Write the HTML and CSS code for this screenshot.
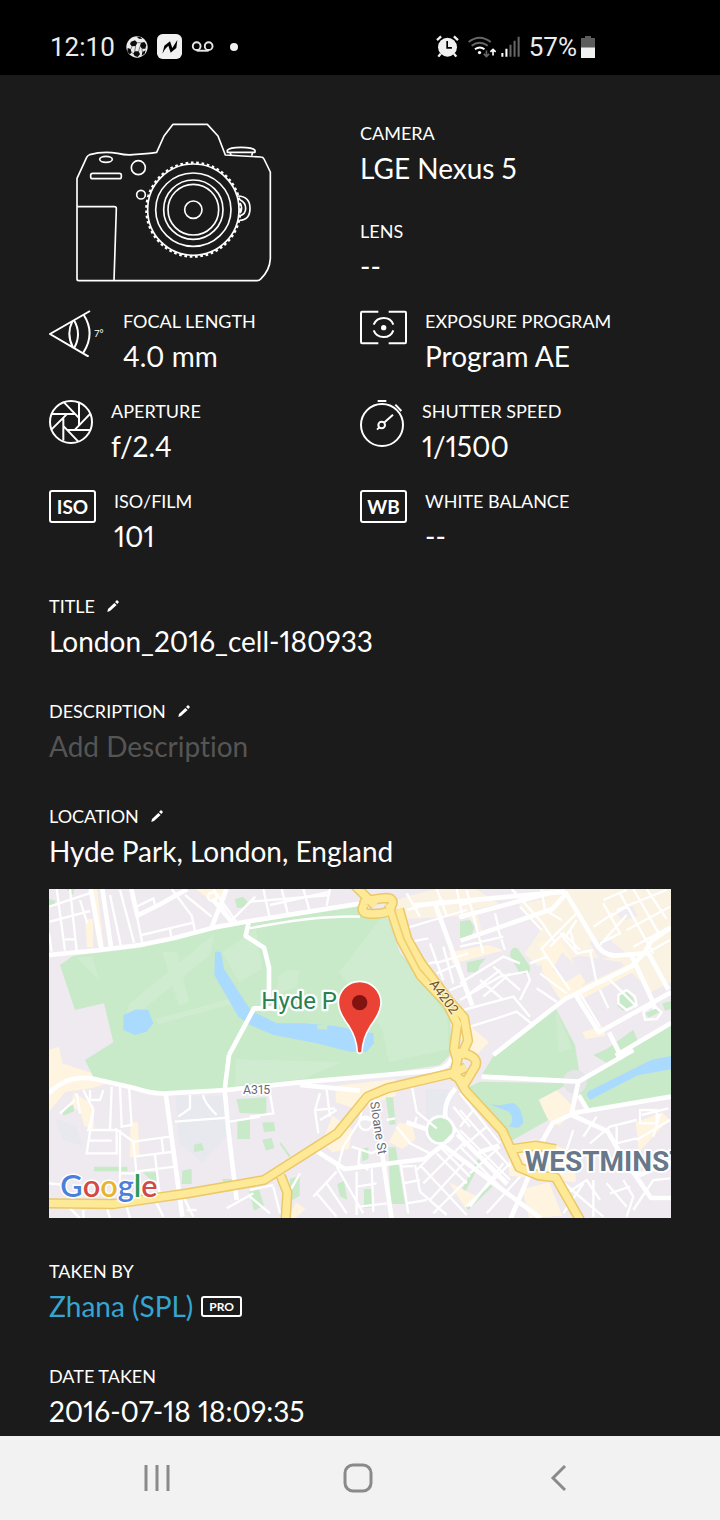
FILE: index.html
```html
<!DOCTYPE html>
<html lang="en">
<head>
<meta charset="utf-8">
<meta name="viewport" content="width=device-width, initial-scale=1">
<title>Photo info</title>
<link rel="stylesheet" href="styles.css">
</head>
<body>
<header class="status">
  <div class="status-group status-left">
    <span>12:10</span>
    <svg class="ball" viewBox="378 107 66 66" width="22" height="22" aria-hidden="true"><circle cx="411" cy="140" r="32" fill="#ececec"/><g fill="#0c0c0c"><path d="M393 124l12-4 7 7-5 10-12 1-5-7zM423 127l10-2 6 9-3 11-10 0-6-8zM383 143l9 3 3 11-6 5-7-8zM404 153l12 0 4 9-7 8-9-3-4-7zM427 155l10-5-3 10-9 6zM410 109l11 1 6 6-10-1z"/></g><g stroke="#444" stroke-width="2"><path d="M407 137l-3 16M420 138l-4 15M412 127l10 0M393 146l3-8M426 145l1 10M395 157l7 3"/></g></svg>
    <svg viewBox="468 102 75 75" width="25" height="25" aria-hidden="true"><rect x="468" y="102" width="75" height="75" rx="17" fill="#f1f1f1"/><path d="M484 161l6-24 17-13 7 20 8-13 7-11-3 24-17 14-7-21-10 11z" fill="#000"/></svg>
    <svg class="voicemail" viewBox="568 120 68 34" width="23" height="11" aria-hidden="true"><g fill="none" stroke="#e6e6e6" stroke-width="6"><circle cx="584" cy="136" r="12"/><circle cx="621" cy="136" r="12"/><path d="M584 150h37"/></g></svg>
    <span class="dot"></span>
  </div>
  <div class="status-group status-right">
    <svg viewBox="229 106 68 68" width="23" height="23" aria-hidden="true"><circle cx="263" cy="142" r="28" fill="#f1f1f1"/><g fill="none" stroke="#f1f1f1" stroke-width="7"><path d="M232 121l12-11M282 110l12 11M243 161l-7 9M282 161l7 9"/><path d="M262 124v20h14" stroke="#000" stroke-width="5"/></g></svg>
    <svg class="wifi" viewBox="321 106 85 66" width="28" height="22" aria-hidden="true"><g fill="none" stroke-width="6"><path d="M323 124q33-26 67 0M332 135q24-18 49 0" stroke="#666"/><path d="M342 146q15-11 29 0" stroke="#fff"/><path d="M377 150v16M369 160l8 8 8-8" stroke="#666" stroke-width="5"/><path d="M397 165v-16M389 154l8-8 8 8" stroke="#fff" stroke-width="5"/></g><circle cx="356" cy="156" r="5" fill="#fff"/></svg>
    <svg class="signal" viewBox="422 110 56 62" width="19" height="21" aria-hidden="true"><path d="M423 160h6v11h-6zM435 148h6v23h-6z" fill="#fff"/><path d="M447 136h6v35h-6zM459 124h6v47h-6zM471 112h6v59h-6z" fill="#666"/></svg>
    <span>57%</span>
    <svg viewBox="663 106 42 66" width="14" height="22" aria-hidden="true"><path d="M663 112h12v-6h18v6h12v28h-42z" fill="#5c5c5c"/><path d="M663 140h42v32h-42z" fill="#f1f1f1"/></svg>
  </div>
</header>

<main class="info">
  <section class="gear">
    <svg class="camera" viewBox="48 40 588 480" width="196" height="160" role="img" aria-label="Camera">
      <g fill="none" stroke="#fff" stroke-width="5" stroke-linejoin="round">
        <path d="M56 513q-5 0-5-5V206L80 143q3-6 9-8 40-11 84-4 25 6 45 4 45-3 72-7L312 79l27-35h103l32 35 22 57 107 6q6 0 9 6l19 39v260q-2 35-28 60-5 6-12 6z"/>
        <path d="M51 291h112q6 0 6 6l-7 216"/>
        <ellipse cx="138" cy="149" rx="19" ry="9"/><rect x="92" y="191" width="92" height="16" rx="6"/>
        <circle cx="235" cy="174" r="21"/><circle cx="243" cy="255" r="13"/>
        <circle cx="400" cy="300" r="137"/><circle cx="400" cy="300" r="141" stroke-width="7" stroke-dasharray="8 8"/>
        <ellipse cx="400" cy="300" rx="113" ry="110"/><circle cx="400" cy="300" r="89"/><circle cx="400" cy="300" r="76"/><circle cx="400" cy="300" r="26"/>
        <path d="M533 259q37 1 37 37t-32 36M540 270q17 8 17 26t-18 23M540 281q10 15 0 30"/>
        <path d="M502 128v-6q6-9 41-9t42 9v6zM510 128l3 8M578 128l-3 10"/>
      </g>
    </svg>
    <dl class="gear-list">
      <div><dt class="label">CAMERA</dt><dd class="value">LGE Nexus 5</dd></div>
      <div><dt class="label">LENS</dt><dd class="value">--</dd></div>
    </dl>
  </section>

  <dl class="specs">
    <div class="spec">
      <svg class="icon" viewBox="57 44 168 141" width="56" height="47" aria-hidden="true"><g fill="none" stroke="#fff" stroke-width="6"><path d="M180 47L60 116l116 68M161 58q36 56-1 114M127 78q-19 38 2 79M132 75q24 41 0 84"/></g><text x="193" y="125" font-family="Lato, sans-serif" font-size="29" fill="#fff">7°</text></svg>
      <div><dt class="label">FOCAL LENGTH</dt><dd class="value">4.0 mm</dd></div>
    </div>
    <div class="spec">
      <svg class="icon" viewBox="45 45 141 105" width="47" height="35" aria-hidden="true"><g fill="none" stroke="#fff" stroke-width="6"><path d="M100 50H51q-3 0-3 4v87q0 4 3 4h49M131 50h49q3 0 3 4v87q0 4-3 4h-49M86 89q8-20 30-20t29 20M86 106q8 20 30 20t29-20"/></g><circle cx="116" cy="98" r="8" fill="#fff"/></svg>
      <div><dt class="label">EXPOSURE PROGRAM</dt><dd class="value">Program AE</dd></div>
    </div>
    <div class="spec">
      <svg class="icon" viewBox="57 315 132 132" width="44" height="44" aria-hidden="true"><g fill="none" stroke="#fff" stroke-width="6"><circle cx="123" cy="381" r="63"/><path d="M102 322l46 48M147 323v69M181 356l-46 48M180 405h-70M145 440l-46-48M100 437v-69M64 404l46-46M65 357h70"/></g></svg>
      <div><dt class="label">APERTURE</dt><dd class="value">f/2.4</dd></div>
    </div>
    <div class="spec">
      <svg class="icon" viewBox="45 315 132 141" width="44" height="47" aria-hidden="true"><g fill="none" stroke="#fff" stroke-width="6"><circle cx="111" cy="390" r="63"/><path d="M98 318h26M151 329l18 19"/><circle cx="110" cy="390" r="10"/><path d="M117 383l27-24M103 397l-7 7"/></g></svg>
      <div><dt class="label">SHUTTER SPEED</dt><dd class="value">1/1500</dd></div>
    </div>
    <div class="spec">
      <span class="icon tag" aria-hidden="true">ISO</span>
      <div><dt class="label">ISO/FILM</dt><dd class="value">101</dd></div>
    </div>
    <div class="spec">
      <span class="icon tag" aria-hidden="true">WB</span>
      <div><dt class="label">WHITE BALANCE</dt><dd class="value">--</dd></div>
    </div>
  </dl>

  <section class="field">
    <h2 class="label">TITLE <button class="edit" type="button" aria-label="Edit title"><svg viewBox="230 28 36 36" width="12" height="12"><path d="M231 64l2-9 19-18 7 6-20 18zM254 34l6-6 6 6-5 6z" fill="#fff"/></svg></button></h2>
    <p class="value">London_2016_cell-180933</p>
  </section>
  <section class="field">
    <h2 class="label">DESCRIPTION <button class="edit" type="button" aria-label="Edit description"><svg viewBox="230 28 36 36" width="12" height="12"><path d="M231 64l2-9 19-18 7 6-20 18zM254 34l6-6 6 6-5 6z" fill="#fff"/></svg></button></h2>
    <p class="value empty">Add Description</p>
  </section>
  <section class="field">
    <h2 class="label">LOCATION <button class="edit" type="button" aria-label="Edit location"><svg viewBox="230 28 36 36" width="12" height="12"><path d="M231 64l2-9 19-18 7 6-20 18zM254 34l6-6 6 6-5 6z" fill="#fff"/></svg></button></h2>
    <p class="value">Hyde Park, London, England</p>
    <svg class="map" viewBox="0 0 1866 987" role="img" aria-label="Map of Hyde Park, London">
      <rect width="1866" height="987" fill="#eeeaef"/>
      <!-- commercial blocks -->
      <g fill="#fef4df">
        <path d="M108 90h24v85h-18zM122 0h22l20 170h-18zM440 0h90v30l-40 10zM0 483l30-10 10 50 90 30 60 25-60 20-80 10-50 60z"/>
        <path d="M75 610l60 40v70l-30-10-10-40-30-20zM245 700h22l5 105h-30z"/>
        <path d="M1020 40l60-20 80-20h120l80 50 100-50h406v280l-60 30-90-90-120-20-130 30-90-80-80-20-40-50-180 10-110 60-60 10z" opacity=".75"/>
        <path d="M1200 190l160-30v25l-150 40zM1470 160l60-10 80 130-70 60-60-90zM1250 400l70 60-40 40-70-80zM1580 300l170-80 10 25-170 90zM1600 430l60-20 10 30-60 10z"/>
        <path d="M860 590l180-20v50l-120 40-60-20zM850 680l60 40-10 60-50 10-30-30zM1020 760l30-60 40 10 10 40-40 30zM1470 620l50-20 60 60-50 50-40-20zM1380 770l80-20 120 40v90l-200-20zM1420 900l80-20 40 100-100 7zM740 940l30 20-30 27h-20zM1200 880l80 40-30 40z"/>
        <path d="M1760 700l80-30 20 20-90 100z"/>
      </g>
      <g fill="#efebf0"><path d="M1280 60l120-25 80 80-60 90-110-40zM1540 190l60 60-50 30-40-40zM1620 160l30 50 90-10-60-50zM1380 0h90l20 30-90 15zM1700 70l50-20 15 30-45 15z"/></g>
      <path d="M1130 600h70v160h-70zM380 620h150l20 100-90 100-70-60zM20 690l60 20 20 60-60-20z" fill="#e3e8ef" opacity=".6"/>
      <!-- parks -->
      <g fill="#c8eac9">
        <path d="M73 200L273 176 493 118 633 98 933 48l5 33 80 7 35 105 80 90 70 100 5 110-35 35-200 30-220 20-220 25-180 10h-70l-100-35-50-15-25-50 85-53-28-117-87 20-45-135z"/>
        <path d="M1298 558l40-65 180-140 60 115 15 95-55 5zM1253 598l40-20 270 5-95 50 30 60-115 65zM1593 585l110-87 163-90v215l-253 45-20-55zM1633 498l40-18 80-58 15 38-60 40-30 25z"/>
        <path d="M1233 97l30-4 13 22-10 30-33 2zM1385 185q10-15 22-5l35 50q5 25-15 25t-22-15l-22-40zM1253 220l58-12-18 20-8 22h-30zM1706 315l30-10 25 38-38 22-18-15zM1790 373l35-17 12 10-38 20zM1840 343l26-7v24l-18 5zM557 30l25-7 14 15-8 18h-24zM52 0h24l-4 18zM0 30l20 5-5 18H0z"/>
        <circle cx="1174" cy="723" r="36"/>
        <path d="M1010 625h22l8 80-18 3zM1018 775h22l28 170h-43zM562 630l90-5v50l-80-3zM565 690h38v60h-38zM640 700h35l4 26-34 4zM640 752l28-5 8 30-25 8zM938 780l20-5v35l-18 7zM945 900h25v55l-25 2zM865 885l20-10 10 57-22-10zM722 870l30-10v60l-25 15zM40 660l33-13 2 20-32 13zM435 767l23-5 8 22-30 5zM135 833h100v14H135zM282 850h42v25l-20-3zM400 845l28-5v45h-30zM520 870h35v20h-30zM695 760l30 40-5 5-28-40zM1240 900l50-95 10 5-50 95zM1250 955l75-70 5 8-72 70zM600 905l30-5 15 50-30 15z"/>
      </g>
      <g fill="#d1ecd2" opacity=".75"><path d="M240 345l255-210-10 60-170 140-90 70zM385 190l35 150-30 10-50-160zM870 250l140-180 45 130 140 180 5 100-180 40-20-100zM690 260l30-20 30 5-5 50-65 20zM520 190l100-70 20 120-70 40zM560 510l320 10-120 50-200 20zM320 390l220-60 10 15-220 60zM80 205l50-3 20 70zM1520 360l50 120-40 10z"/></g>
      <circle cx="1578" cy="578" r="36" fill="#e5e4e6"/>
      <g fill="#aadafe">
        <path d="M223 378l40-17 35 2 15 40-20 25-35 10-35-15zM498 188h18l9 52 58 90 28 42h10l62 31h80l90 7 120 23 2 30-22 25h-50l-100-25-130-25-70-30-35-25-72-125z"/>
        <path d="M1616 608l190-95 60-12v40l-100 18-142 73-10-12zM1323 646l28 3 40-7q28 10 32 60l-15 15-28-4q22-28-5-47-28-8-52-20z"/>
      </g>
      <path d="M805 408h30v13h-30z" fill="#c8eac9"/>
      <!-- lanes -->
      <g fill="none" stroke="#fff" stroke-width="7">
        <g transform="translate(-27 -27)"><path d="M50 27l25 185M90 27l20 185M28 80l120-40M30 125l120-32M75 178h35M120 60l22 70M240 30l42 158M210 45l32 150M285 80l22 110M290 80l50-25 5 20M305 165l155-37M390 145l4 30M395 27l60 80 10 45M435 45l80 65M520 27l70 100M545 75l30 50M576 120l70-70M27 160l8 55"/><circle cx="517" cy="50" r="13"/></g>
        <g transform="translate(603 -27)"><path d="M0 65l240-20M40 27l20 90M95 27l20 80M160 27l20 70M240 27l-10 50M60 75l180-40M0 145q200-40 330-35M470 90l110-30M450 150l200-60M455 190l80-15M470 40l40 70M500 260l60-15M540 190l40 110M580 200l30 110M555 250l100-30M560 280l70-30M600 330l50-20M560 27l30 80M620 27l20 90M590 340l60 90"/></g>
        <g transform="translate(1233 -27)"><path d="M20 30l50 190M105 100l10 40M115 150l20 60M0 75l100-25M155 27l90 100 40 60M245 30l10 60 50 30M180 80l65 70M0 200l130-30M0 310l130-80 50 20M30 340l90-70M70 350l80-70M60 300l70 60M100 260l80 70M0 360l120-70 80-15 10 25-30 60M10 390l150-40 50 60M30 440l80-25 60-20 50 40M210 250l50-20-15-25 110-110M260 230l70 100M240 280l80 60M230 325l60 40M270 200l40-40 50 50M300 160l50 60M330 150l20 70 50-10M390 210l20 100M350 120l-40 60M430 70l50 90-60 30M400 140l60-40M420 195l80-90M430 60l70-30M450 110l50-30M480 40l100 180M520 27l80 140M560 27l60 90M470 90l150-60M500 150l130-70M520 200l110-60M560 220l70-40M360 340l60 100M420 330l25 55M440 290l90 90M475 345l25-15 25 20 5 25-30 15-25-20zM550 395l30-20 25 22-15 20-35 2z"/></g>
        <g transform="translate(-27 483)"><path d="M130 120l30 60M150 120v30h30l10-30M160 180l-15 60h85v70h-90zM145 272h70M215 110l-5 130M240 110l5 120 30-5-8-115M225 235l55 40 10 100M240 240v170M280 275l110-15M282 320l120-15M365 265l5 45M285 365l120-15M345 315l15 130M405 215l160-12M570 215l90-15M450 135v40l-35 25M490 135q0 20 40 60M110 130l10 60M60 190l45-40M440 480h30M560 475l80-45M90 475l30 30M130 480v25M200 470l10 35M260 470l10 35M350 460l20 40M430 440l30 60M27 400l50 5M240 370h60"/></g>
        <g transform="translate(603 483)"><path d="M55 100l15 90-70 10M210 130l-15 50 10 70M195 180l60-5M230 120l10 80M210 210l50-30M340 150l-10 60-50 80-15 55M330 210q30-10 45 15M305 290l60 20 40-20M330 300l-5 40 30 20M485 105l15 80 60 50M500 200l-5 20M495 345l15 80 80 70M510 345l140 150M190 440l70-75M200 430l60 70M230 400l60 90M260 350l80 140M320 365v130M365 355l5 130M320 410l60-10M330 470l80-10M450 330l25 160M450 350l40-2M460 400l50-10M470 460l60-10M610 170l50 60M590 200l60 80M570 290l90 90M560 310l90 90M620 240l-120 120M650 270l-130 130M650 330l-110 120M650 390l-100 100M440 230l40 50 60 30M410 210l25-5M0 420l70-15M0 440l60 50M70 410l20 80M150 370l-40 70"/><circle cx="347" cy="220" r="20"/></g>
        <g transform="translate(1233 483)"><path d="M0 130l120 150M0 180l150 170M0 240l150 150M0 290l130 130M40 180l-40 50M80 230l-70 60M120 290l-90 80M150 340l-130 130M180 380l-100 110M30 470l100-130M340 240l-20 60M370 260l40-60M390 280l60-50 80-20M470 230v50l60-15M540 180h50v40h-50zM545 195l80-20M600 190l-20 70M530 270l100-60M300 390l130 110M320 430l60-40 40 60M370 400l-60 90M440 400l60 70M490 390l30 50-20 60M450 430l60-20M520 480l60-90 50-5M400 390v110"/></g>
      </g>
      <!-- streets -->
      <g fill="none" stroke="#fff" stroke-width="14" stroke-linejoin="round">
        <path d="M0 198L153 183 273 168 373 148 493 116 603 96 933 44M125 0l33 182M160 0l27 180M247 0l18 80 70-35 80-45M533 0l-45 115M490 30l60 70M600 96l-10 45 55 35 15 60v90M540 498l75-140h60M540 498l-13 105 12 130 24 200M350 613l50 370M0 613q60-60 140-42l113 25q60 20 100 17l180-10 210-22 400-35q60-10 65-40M753 588l180 17M797 782l90 58 240-30 45-35M1174 763l300 224"/>
        <path d="M973 610l55 380M1190 688q-8-50 30-90M1225 735l150 150M1132 720l-60-20M1090 50L1548 8M1230 85l280-75M1235 155l275-95 45-50M1160 50l110 300M1548 8l90 150q20 40 60 42l100-8 60 110M1333 498l215-168 200-98 38-40 20-35 60-42M1748 200l60 130 10 30M1575 310l75 120 216-120M1700 500l166-98M1680 430l30 60M1298 563l290 15 165-95M1588 578l-20 95 60-10 238-40M1590 620l30 50M1566 677l-55 25-40 70M1566 677l110 50 40 70 90 130h60M1715 797l60 60 90-40M1290 790l60-20M1440 860l-60 140" />
        <circle cx="1174" cy="723" r="41" stroke-width="8"/>
      </g>
      <!-- main roads -->
      <defs><g id="arteries"><path d="M918-10l60 60M945 47q0-18 25-15l40-5q25 0 20 18l-12 23q-30 10-65 5-20-5-8-26M1020 45l35 105 60 110 80 85 30 60-10 75 10 35M1050 60l25 90 40 70 85 115 45 50 12 70-22 50M-5 943l200 2 220-32 230-40 220-140 90-110 60-25 205-48 30-15M695 860l20 50-5 80M1215 545l35 60 110 120 50 110 60 25 50 5 40 70 40 70M1390 780l70-10 60 10"/><path d="M1230 490q60 10 50 40l-30 50-35-20z"/></g></defs>
      <g fill="none" stroke-linejoin="round"><use href="#arteries" stroke="#ebc868" stroke-width="31"/><use href="#arteries" stroke="#fee997" stroke-width="22"/><path d="M1036 62l30 90 46 88 88 100 20 25" stroke="#f0cf73" stroke-width="5"/></g>
      <g font-family="Roboto, sans-serif" paint-order="stroke" stroke="#fff" stroke-linejoin="round">
        <text x="637" y="360" font-size="72" fill="#278150" stroke-width="14">Hyde P</text>
        <text x="582" y="615" font-size="37" fill="#666b72" stroke-width="10">A315</text>
        <text font-size="40" fill="#6b5430" stroke="#fff4c8" stroke-width="6" transform="translate(1140 284) rotate(54)">A4202</text>
        <text font-size="38" fill="#666b72" stroke-width="10" transform="translate(963 640) rotate(81)">Sloane St</text>
        <text x="1427" y="846" font-size="84" font-weight="700" fill="#687888" stroke-width="12">WESTMINST</text>
      </g>
      <path d="M925 489q-2-42-25-77-32-43-32-71a64 64 0 0 1 128 0q0 28-32 71-23 35-25 77-7 8-14 0z" fill="#ea4335" stroke="#fff" stroke-width="5"/>
      <circle cx="932" cy="341" r="23" fill="#811411"/>
      <text x="34" y="925" font-family="Lato, sans-serif" font-size="92" font-weight="600" paint-order="stroke" stroke="#fff" stroke-width="9"><tspan fill="#4a7fdc">G</tspan><tspan fill="#d14a43">o</tspan><tspan fill="#e7b42d">o</tspan><tspan fill="#4a7fdc">g</tspan><tspan fill="#2f9b57">l</tspan><tspan fill="#d14a43">e</tspan></text>
    </svg>
  </section>
  <section class="field">
    <h2 class="label">TAKEN BY</h2>
    <p class="value author"><a href="#author">Zhana (SPL)</a><span class="pro">PRO</span></p>
  </section>
  <section class="field">
    <h2 class="label">DATE TAKEN</h2>
    <p class="value">2016-07-18 18:09:35</p>
  </section>
</main>

<nav class="navbar">
  <button type="button" aria-label="Recent apps"><svg viewBox="0 0 30 30" width="30" height="30"><path d="M4 2v26M15 2v26M26 2v26" stroke="#8a8a8a" stroke-width="3"/></svg></button>
  <button type="button" aria-label="Home"><svg viewBox="0 0 30 30" width="30" height="30"><rect x="2" y="2" width="26" height="26" rx="8" fill="none" stroke="#8a8a8a" stroke-width="3"/></svg></button>
  <button type="button" aria-label="Back"><svg viewBox="0 0 30 30" width="30" height="30"><path d="M21 3L9 15l12 12" fill="none" stroke="#8a8a8a" stroke-width="3"/></svg></button>
</nav>
</body>
</html>
```

FILE: styles.css
```css
* {
  box-sizing: border-box;
}

body {
  margin: 0;
  min-height: 100vh;
  display: flex;
  flex-direction: column;
  background: #1b1b1b;
  color: #fff;
  font-family: Lato, "Open Sans", sans-serif;
  font-variant-ligatures: none;
  font-variant-numeric: proportional-nums;
}

h2, p, dl, dd {
  margin: 0;
  font-weight: 400;
}

svg {
  display: block;
  flex: none;
}

button {
  border: 0;
  padding: 0;
  background: none;
  color: inherit;
  font: inherit;
}

.status {
  display: flex;
  justify-content: space-between;
  height: 75px;
  padding: 18px 125px 0 50px;
  background: #000;
  color: #ececec;
  font: 26px/58px Roboto, sans-serif;
}

.status-group {
  display: flex;
  align-items: center;
}

.status-left {
  gap: 9px;
}

.status-left .ball {
  margin-left: 2px;
}

.status-right {
  gap: 9px;
}

.signal {
  margin-left: -4px;
}

.status-right span {
  margin-right: -5px;
}

.dot {
  width: 8px;
  height: 8px;
  margin-left: 7px;
  border-radius: 50%;
  background: #f1f1f1;
}

.info {
  flex: 1;
  padding: 43px 49px 5px;
}

.label {
  display: flex;
  align-items: center;
  gap: 12px;
  font-size: 18px;
  line-height: 30px;
}

.value {
  font-size: 28px;
  line-height: 40px;
}

.gear,
.specs {
  display: grid;
  grid-template-columns: 1fr 1fr;
}

.camera {
  margin: 5px 0 0 27px;
}

.gear-list {
  display: grid;
  gap: 28px;
}

.specs {
  margin-top: 20px;
  row-gap: 20px;
}

.spec {
  display: flex;
  align-items: flex-start;
  gap: 18px;
}

.icon {
  margin-top: 4px;
}

.tag {
  width: 47px;
  height: 33px;
  border: 2px solid #fff;
  border-radius: 3px;
  font-size: 19px;
  font-weight: 700;
  line-height: 29px;
  text-align: center;
}

.field {
  margin-top: 35px;
}

.edit {
  cursor: pointer;
}

.empty {
  color: #555;
}

.map {
  width: 100%;
  height: auto;
  margin: 18px 0 38px;
}

.author {
  display: flex;
  align-items: center;
  gap: 8px;
}

.author a {
  color: #35a5d2;
  text-decoration: none;
}

.pro {
  padding: 0 6px;
  border: 2px solid #fff;
  border-radius: 3px;
  font-size: 12px;
  font-weight: 700;
  line-height: 17px;
}

.field:has(.map) + .field {
  margin-top: 0;
}

.navbar {
  display: flex;
  justify-content: space-around;
  align-items: center;
  height: 84px;
  padding: 0 60px 0 56px;
  background: #f2f2f2;
}

.navbar button {
  display: grid;
  place-items: center;
  width: 96px;
  height: 64px;
}
```
